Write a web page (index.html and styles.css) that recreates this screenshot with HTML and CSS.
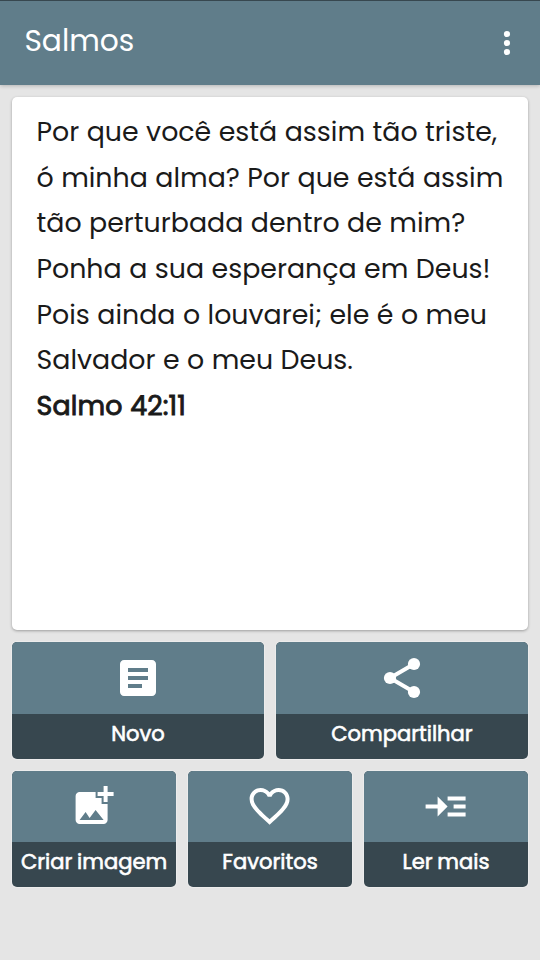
FILE: index.html
```html
<!DOCTYPE html>
<html lang="pt-BR">
<head>
<meta charset="utf-8">
<title>Salmos</title>
<link rel="stylesheet" href="styles.css">
</head>
<body>
<header class="bar">
  <h1 class="title">Salmos</h1>
  <svg class="menu" viewBox="0 0 8 26"><circle cx="4" cy="4" r="3.1"/><circle cx="4" cy="13" r="3.1"/><circle cx="4" cy="22" r="3.1"/></svg>
</header>
<main class="content">
  <article class="card">
    <p class="line">Por que você está assim tão triste,</p>
    <p class="line">ó minha alma? Por que está assim</p>
    <p class="line">tão perturbada dentro de mim?</p>
    <p class="line">Ponha a sua esperança em Deus!</p>
    <p class="line">Pois ainda o louvarei; ele é o meu</p>
    <p class="line">Salvador e o meu Deus.</p>
    <p class="line verse">Salmo 42:11</p>
  </article>
  <div class="row">
    <button class="action"><span class="face"><svg class="icon" viewBox="0 0 24 24"><path d="M19 3H5c-1.100 0-2 .9-2 2v14c0 1.100.9 2 2 2h14c1.100 0 2-.9 2-2V5c0-1.100-.9-2-2-2zm-5 14H7v-2h7v2zm3-4H7v-2h10v2zm0-4H7V7h10v2z"/></svg></span><span class="label">Novo</span></button>
    <button class="action"><span class="face"><svg class="icon" viewBox="0 0 24 24"><path d="M6 12L18 5M6 12l12 7" fill="none" stroke="#fff" stroke-width="2"/><circle cx="6" cy="12" r="3.050"/><circle cx="18" cy="5" r="3.050"/><circle cx="18" cy="19" r="3.050"/></svg></span><span class="label">Compartilhar</span></button>
  </div>
  <div class="row">
    <button class="action"><span class="face"><svg class="icon" viewBox="0.2 0 24 24"><path d="M19 7v2.990s-1.990.01-2 0V7h-3s.01-1.990 0-2h3V2h2v3h3v2h-3zm-3 4V8h-3V5H5c-1.100 0-2 .9-2 2v12c0 1.100.9 2 2 2h12c1.100 0 2-.9 2-2v-8h-3zM5 19l3-4 2 3 3-4 4 5H5z"/></svg></span><span class="label">Criar imagem</span></button>
    <button class="action"><span class="face"><svg class="icon" viewBox="0.2 0 24 24"><path d="M16.500 3c-1.740 0-3.410.81-4.500 2.090C10.910 3.810 9.240 3 7.500 3 4.420 3 2 5.420 2 8.500c0 3.780 3.400 6.860 8.550 11.540L12 21.350l1.450-1.320C18.600 15.360 22 12.280 22 8.500 22 5.420 19.580 3 16.500 3zm-4.400 15.550l-.1.100-.1-.1C7.140 14.240 4 11.390 4 8.500 4 6.500 5.500 5 7.500 5c1.540 0 3.040.99 3.570 2.360h1.870C13.460 5.990 14.960 5 16.500 5c2 0 3.500 1.500 3.500 3.500 0 2.890-3.140 5.740-7.900 10.050z"/></svg></span><span class="label">Favoritos</span></button>
    <button class="action"><span class="face"><svg class="icon" viewBox="0.2 -0.2 24 24"><path d="M13 7h9v2h-9zM13 15h9v2h-9zM16 11h6v2h-6zM13 12L8 7v4H2v2h6v4z"/></svg></span><span class="label">Ler mais</span></button>
  </div>
</main>
</body>
</html>
```
FILE: styles.css
```css
* { box-sizing: border-box; }
body {
  margin: 0;
  height: 960px;
  overflow: hidden;
  background: #e5e5e5;
  font-family: Poppins, Inter, "Open Sans", sans-serif;
}
.bar {
  height: 85px;
  padding: 0 29.500px 0 24.400px;
  display: flex;
  justify-content: space-between;
  background: #607d8a;
  border-top: 1px solid #37474f;
  box-shadow: 0 1px 4px rgba(0, 0, 0, .22);
}
.title {
  margin: 20px 0 0;
  font-size: 29.700px;
  line-height: 40px;
  font-weight: 400;
  color: #fff;
}
.menu { width: 8px; height: 26px; margin-top: 29px; fill: #fff; }
.content {
  padding: 12px;
  display: flex;
  flex-direction: column;
  gap: 12px;
}
.card {
  height: 533px;
  padding: 12px 0 0 24.500px;
  border-radius: 5px;
  background: #fff;
  box-shadow: 0 1px 3px rgba(0, 0, 0, .32);
}
.line {
  margin: 0;
  font-size: 26.840px;
  line-height: 45.650px;
  font-weight: 400;
  word-spacing: .3px;
  white-space: nowrap;
  color: #1a1a1a;
}
.verse { letter-spacing: .15px; -webkit-text-stroke: .9px #1a1a1a; }
.row { display: flex; gap: 12px; height: 116.500px; }
.action {
  flex: 1 1 0;
  min-width: 0;
  padding: 0;
  border: 0;
  border-radius: 5px;
  overflow: hidden;
  display: flex;
  flex-direction: column;
  background: #37474f;
  color: #fff;
  font: inherit;
  box-shadow: 0 0 1px 1px rgba(255, 255, 255, .3);
}
.face {
  width: 100%;
  height: 71.500px;
  display: flex;
  justify-content: center;
  align-items: center;
  background: #607d8a;
}
.icon { width: 48px; height: 48px; fill: #fff; }
.label {
  width: 100%;
  height: 45px;
  line-height: 39px;
  text-align: center;
  white-space: nowrap;
  font-size: 21.050px;
  font-weight: 400;
  word-spacing: -.8px;
  -webkit-text-stroke: .6px #fff;
}
```
